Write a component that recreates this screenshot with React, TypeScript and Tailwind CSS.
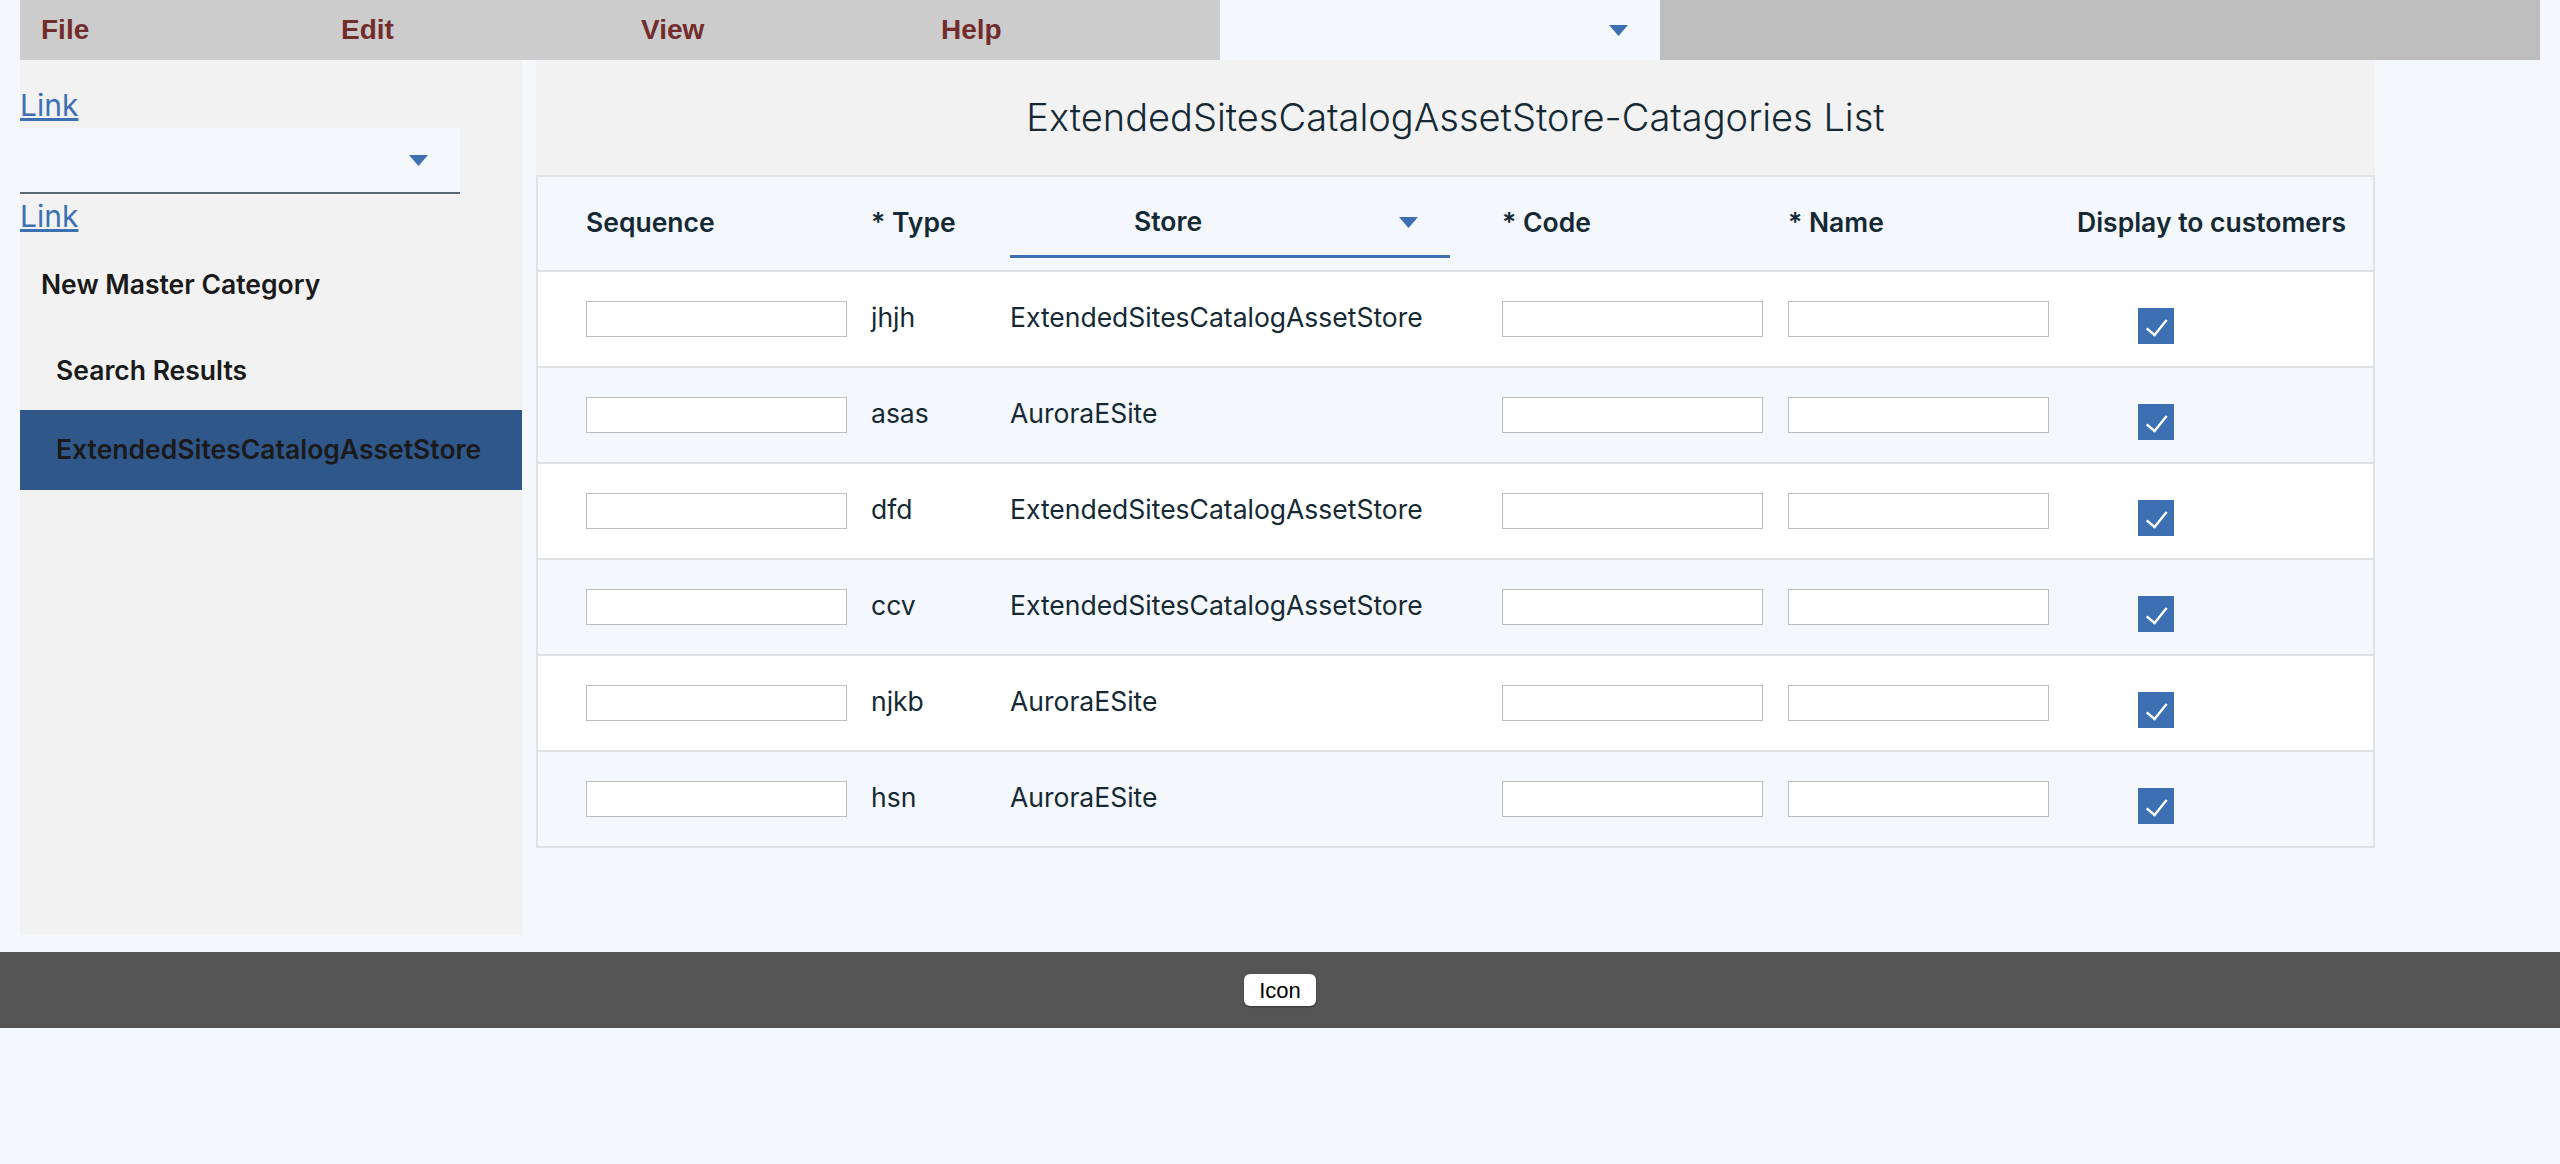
import React from "react";

const BODY = { fontFamily: '"Inter", "Noto Sans", sans-serif' };
const ARIAL = { fontFamily: '"Liberation Sans", Arial, sans-serif' };

function Arrow() {
  return (
    <svg width="19" height="11" viewBox="0 0 19 11" className="block">
      <path d="M0 0 L19 0 L9.5 11 Z" fill="#3d70b2" />
    </svg>
  );
}

function Check() {
  return (
    <div className="w-[36px] h-[36px] bg-[#3d70b2] flex items-center justify-center">
      <svg width="36" height="36" viewBox="0 0 36 36">
        <path d="M8.7 20.3 L16.5 27 L28.7 12" fill="none" stroke="#ffffff" strokeWidth="2.4" />
      </svg>
    </div>
  );
}

const rows = [
  { type: "jhjh", store: "ExtendedSitesCatalogAssetStore" },
  { type: "asas", store: "AuroraESite" },
  { type: "dfd", store: "ExtendedSitesCatalogAssetStore" },
  { type: "ccv", store: "ExtendedSitesCatalogAssetStore" },
  { type: "njkb", store: "AuroraESite" },
  { type: "hsn", store: "AuroraESite" },
];

function TextInput() {
  return <div className="w-[261px] h-[36px] bg-white border border-[#bdbdbd]" />;
}

export default function App() {
  return (
    <div className="relative min-h-[1164px] bg-[#f4f7fb] text-[#152935]" style={BODY}>
      <div className="px-[20px]">
        <header className="flex h-[60px]">
          <div className="flex w-[1200px] bg-[#cccccc]">
            {["File", "Edit", "View", "Help"].map((m) => (
              <div key={m} className="w-[300px] pl-[21px] flex items-center text-[28px] font-bold text-[#732c2c]" style={ARIAL}>
                {m}
              </div>
            ))}
          </div>
          <div className="w-[440px] bg-[#f4f7fb] flex items-center justify-end pr-[32px]">
            <Arrow />
          </div>
          <div className="flex-1 bg-[#bebebe]" />
        </header>

        <div className="flex gap-[14px]">
          <aside className="w-[502px] h-[875px] bg-[#f2f2f2] flex flex-col">
            <div className="h-[24px]" />
            <div className="h-[42px] flex items-center">
              <a href="#" className="text-[30px] text-[#3d70b2] underline">Link</a>
            </div>
            <div className="h-[2px]" />
            <div className="w-[440px] h-[66px] bg-[#f4f7fb] border-b-2 border-[#5a6872] flex items-center justify-end pr-[32px]">
              <Arrow />
            </div>
            <div className="h-[44px] flex items-center">
              <a href="#" className="text-[30px] text-[#3d70b2] underline">Link</a>
            </div>
            <div className="h-[94px] flex items-center pl-[21px] text-[26.5px] font-semibold text-[#1a1a1a]">New Master Category</div>
            <div className="h-[78px] flex items-center pl-[36px] text-[26.5px] font-semibold text-[#1a1a1a]">Search Results</div>
            <div className="h-[80px] flex items-center pl-[36px] text-[26.5px] font-semibold text-[#1a1a1a] bg-[#30578a]">ExtendedSitesCatalogAssetStore</div>
          </aside>

          <main className="w-[1839px]">
            <div className="h-[115px] bg-[#f2f2f2] flex items-center justify-center text-[38px] font-light">
              ExtendedSitesCatalogAssetStore-Catagories List
            </div>
            <div className="border-t-2 border-x-2 border-[#dfe3e6]">
              <div className="flex h-[95px] bg-[#f4f7fb] border-b-2 border-[#dfe3e6] items-center text-[26.5px] font-semibold">
                <div className="w-[333px] pl-[48px] -mt-[2px]">Sequence</div>
                <div className="w-[139px] -mt-[2px]">* Type</div>
                <div className="w-[492px]">
                  <div className="w-[440px] h-[68px] border-b-[3px] border-[#3d70b2] flex items-center pl-[124px] pr-[32px] justify-between">
                    <span>Store</span>
                    <Arrow />
                  </div>
                </div>
                <div className="w-[286px] -mt-[2px]">* Code</div>
                <div className="w-[289px] -mt-[2px]">* Name</div>
                <div className="flex-1 -mt-[2px]">Display to customers</div>
              </div>
              {rows.map((r, i) => (
                <div key={i} className={`flex h-[96px] border-b-2 border-[#dfe3e6] items-center text-[26.5px] ${i % 2 === 0 ? "bg-white" : "bg-[#f4f7fb]"}`}>
                  <div className="w-[333px] pl-[48px]">
                    <TextInput />
                  </div>
                  <div className="w-[139px] -mt-[2px]">{r.type}</div>
                  <div className="w-[492px] -mt-[2px]">{r.store}</div>
                  <div className="w-[286px]">
                    <TextInput />
                  </div>
                  <div className="w-[289px]">
                    <TextInput />
                  </div>
                  <div className="flex-1 pl-[61px] pt-[14px]">
                    <Check />
                  </div>
                </div>
              ))}
            </div>
          </main>
        </div>
      </div>

      <footer className="mt-[17px] h-[76px] bg-[#555555] flex items-center justify-center">
        <button className="w-[72px] h-[32px] rounded-[6px] bg-white text-black text-[22px] shadow-[0_1px_2px_rgba(0,0,0,0.4)]" style={ARIAL}>
          Icon
        </button>
      </footer>
    </div>
  );
}
